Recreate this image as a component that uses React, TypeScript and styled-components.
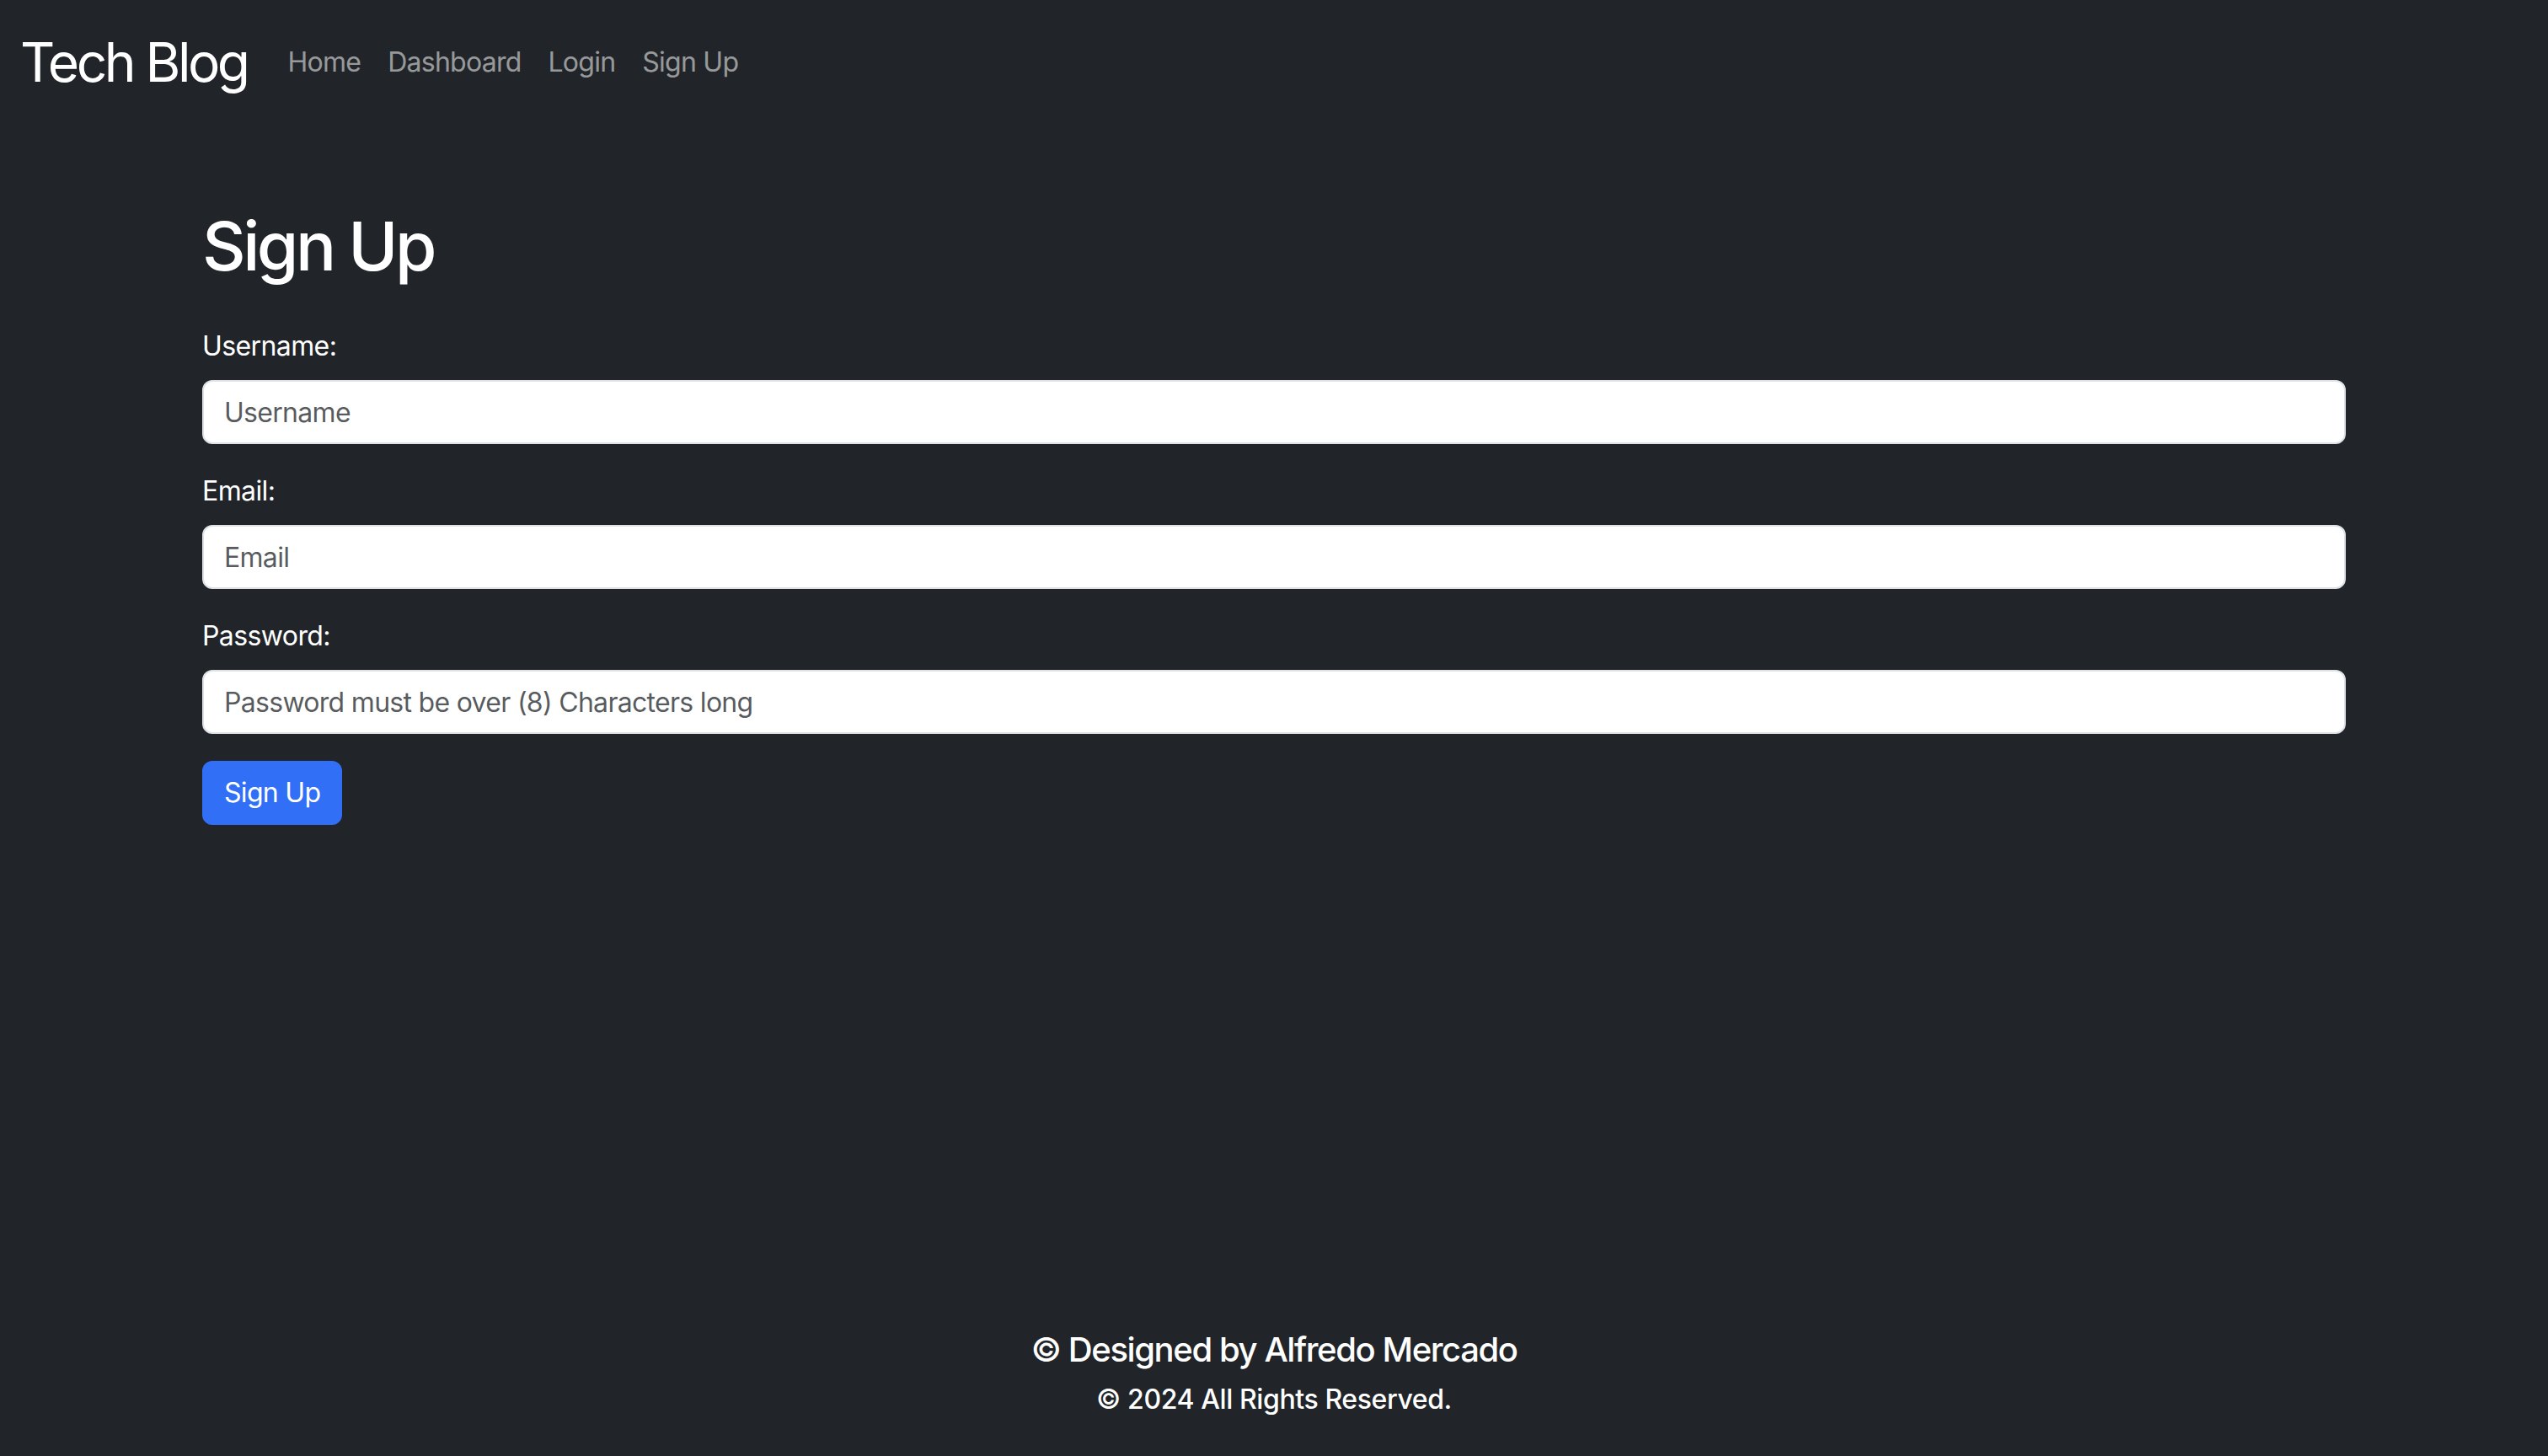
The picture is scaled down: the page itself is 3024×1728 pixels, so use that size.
import React from 'react';
import styled, { createGlobalStyle } from 'styled-components';

const GlobalStyle = createGlobalStyle`
  html {
    font-size: 32px;
  }
  * {
    box-sizing: border-box;
  }
  body {
    margin: 0;
    background-color: #212529;
    color: #ffffff;
    font-family: Inter, "Liberation Sans", sans-serif;
    line-height: 1.5;
  }
`;

const navLinks = ['Home', 'Dashboard', 'Login', 'Sign Up'];

const fields = [
  { id: 'username', label: 'Username:', type: 'text', placeholder: 'Username' },
  { id: 'email', label: 'Email:', type: 'email', placeholder: 'Email' },
  {
    id: 'password',
    label: 'Password:',
    type: 'password',
    placeholder: 'Password must be over (8) Characters long',
  },
];

const App = () => {
  return (
    <>
      <GlobalStyle />
      <Page>
        <Navbar>
          <Brand href="#">Tech Blog</Brand>
          <NavList>
            {navLinks.map((link) => (
              <li key={link}>
                <NavLink href="#">{link}</NavLink>
              </li>
            ))}
          </NavList>
        </Navbar>

        <Main>
          <Title>Sign Up</Title>
          <form onSubmit={(e) => e.preventDefault()}>
            {fields.map((field) => (
              <FormGroup key={field.id}>
                <Label htmlFor={field.id}>{field.label}</Label>
                <Input
                  id={field.id}
                  type={field.type}
                  placeholder={field.placeholder}
                />
              </FormGroup>
            ))}
            <SubmitButton type="submit">Sign Up</SubmitButton>
          </form>
        </Main>

        <Footer>
          <FooterTitle>© Designed by Alfredo Mercado</FooterTitle>
          <FooterNote>© 2024 All Rights Reserved.</FooterNote>
        </Footer>
      </Page>
    </>
  );
};

export default App;

const Page = styled.div`
  display: flex;
  flex-direction: column;
  min-height: 100vh;
`;

const Navbar = styled.nav`
  display: flex;
  align-items: center;
  padding: 16px 24px;
`;

const Brand = styled.a`
  font-size: 2rem;
  line-height: 1.5;
  padding: 10px 0;
  margin-right: 32px;
  color: #ffffff;
  text-decoration: none;
  letter-spacing: -3.5px;
`;

const NavList = styled.ul`
  display: flex;
  list-style: none;
  margin: 0;
  padding: 0;
`;

const NavLink = styled.a`
  display: block;
  padding: 16px;
  font-size: 1rem;
  color: rgba(255, 255, 255, 0.55);
  text-decoration: none;
  letter-spacing: -0.75px;
`;

const Main = styled.main`
  flex: 1;
  width: 100%;
  max-width: 2640px;
  margin: 0 auto;
  padding: 0 48px;
`;

const Title = styled.h1`
  margin: 96px 0 47px;
  font-size: 2.5rem;
  font-weight: 500;
  line-height: 1.2;
  letter-spacing: -3.5px;
`;

const FormGroup = styled.div`
  margin-bottom: 32px;
`;

const Label = styled.label`
  display: inline-block;
  margin-bottom: 16px;
  font-size: 1rem;
  letter-spacing: -0.6px;
`;

const Input = styled.input`
  display: block;
  width: 100%;
  height: 76px;
  padding: 12px 24px;
  font-family: inherit;
  font-size: 1rem;
  line-height: 1.5;
  color: #212529;
  background-color: #ffffff;
  border: 2px solid #dee2e6;
  border-radius: 12px;
  letter-spacing: -0.7px;

  &::placeholder {
    color: rgba(33, 37, 41, 0.75);
  }
`;

const SubmitButton = styled.button`
  padding: 12px 24px;
  font-family: inherit;
  font-size: 1rem;
  line-height: 1.5;
  color: #ffffff;
  background-color: #3170f6;
  border: 2px solid #3170f6;
  border-radius: 12px;
  cursor: pointer;
  letter-spacing: -0.7px;
`;

const Footer = styled.footer`
  padding: 32px;
  text-align: center;
`;

const FooterTitle = styled.h5`
  margin: 0 0 16px;
  font-size: 1.25rem;
  font-weight: 500;
  line-height: 1.2;
  letter-spacing: -1.4px;
`;

const FooterNote = styled.h6`
  margin: 0 0 16px;
  font-size: 1rem;
  font-weight: 500;
  line-height: 1.2;
  letter-spacing: -0.4px;
`;
